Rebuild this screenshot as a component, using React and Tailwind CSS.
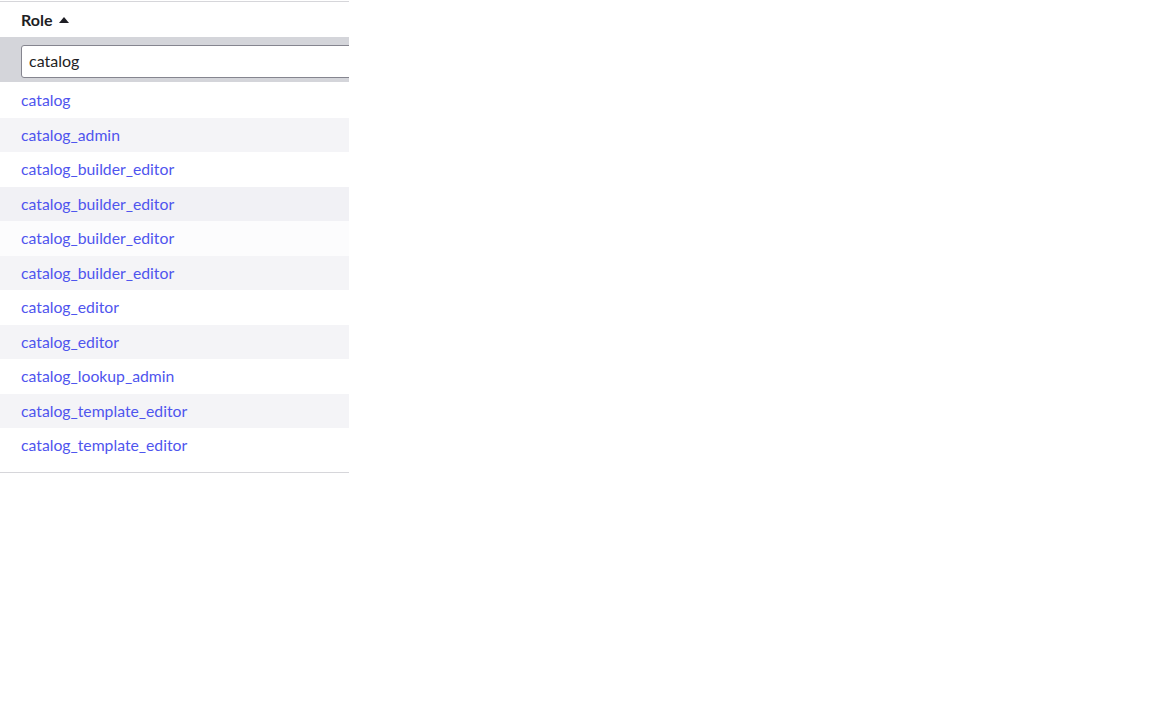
import React from "react";

const rows = [
  { name: "catalog", bg: "bg-white" },
  { name: "catalog_admin", bg: "bg-[#f4f4f7]" },
  { name: "catalog_builder_editor", bg: "bg-white" },
  { name: "catalog_builder_editor", bg: "bg-[#f1f1f5]" },
  { name: "catalog_builder_editor", bg: "bg-[#fcfcfd]" },
  { name: "catalog_builder_editor", bg: "bg-[#f4f4f7]" },
  { name: "catalog_editor", bg: "bg-white" },
  { name: "catalog_editor", bg: "bg-[#f4f4f7]" },
  { name: "catalog_lookup_admin", bg: "bg-white" },
  { name: "catalog_template_editor", bg: "bg-[#f4f4f7]" },
  { name: "catalog_template_editor", bg: "bg-white" },
];

export default function App() {
  return (
    <div className="w-[1152px] h-[720px] bg-white" style={{ fontFamily: "Lato, 'Open Sans', sans-serif" }}>
      <div className="w-[349px] overflow-hidden mt-px border-t border-[#d6d6da] border-b pb-[9px]">
        <div className="h-[35px] flex items-center pl-[21px] gap-[7px] pt-px">
          <span className="text-[16px] font-bold text-[#1e1e24]">Role</span>
          <svg width="10" height="6" viewBox="0 0 10 6"><path d="M0 6 L5 0 L10 6 Z" fill="#1e1e24" /></svg>
        </div>
        <div className="h-[45px] bg-[#d4d5da] pl-[21px] pt-[8px]">
          <div className="w-[360px] h-[33px] bg-white border border-[#85858f] rounded-[3px] flex items-center pl-[7px] pb-[2px] text-[16px] text-[#1e1e24]">
            catalog
          </div>
        </div>
        <div className="pt-px">
          {rows.map((r, i) => (
            <div key={i} className={`h-[34.5px] flex items-center pl-[21px] ${r.bg}`}>
              <span className="text-[15.75px] text-[#4f55ee]">{r.name}</span>
            </div>
          ))}
        </div>
      </div>
    </div>
  );
}
